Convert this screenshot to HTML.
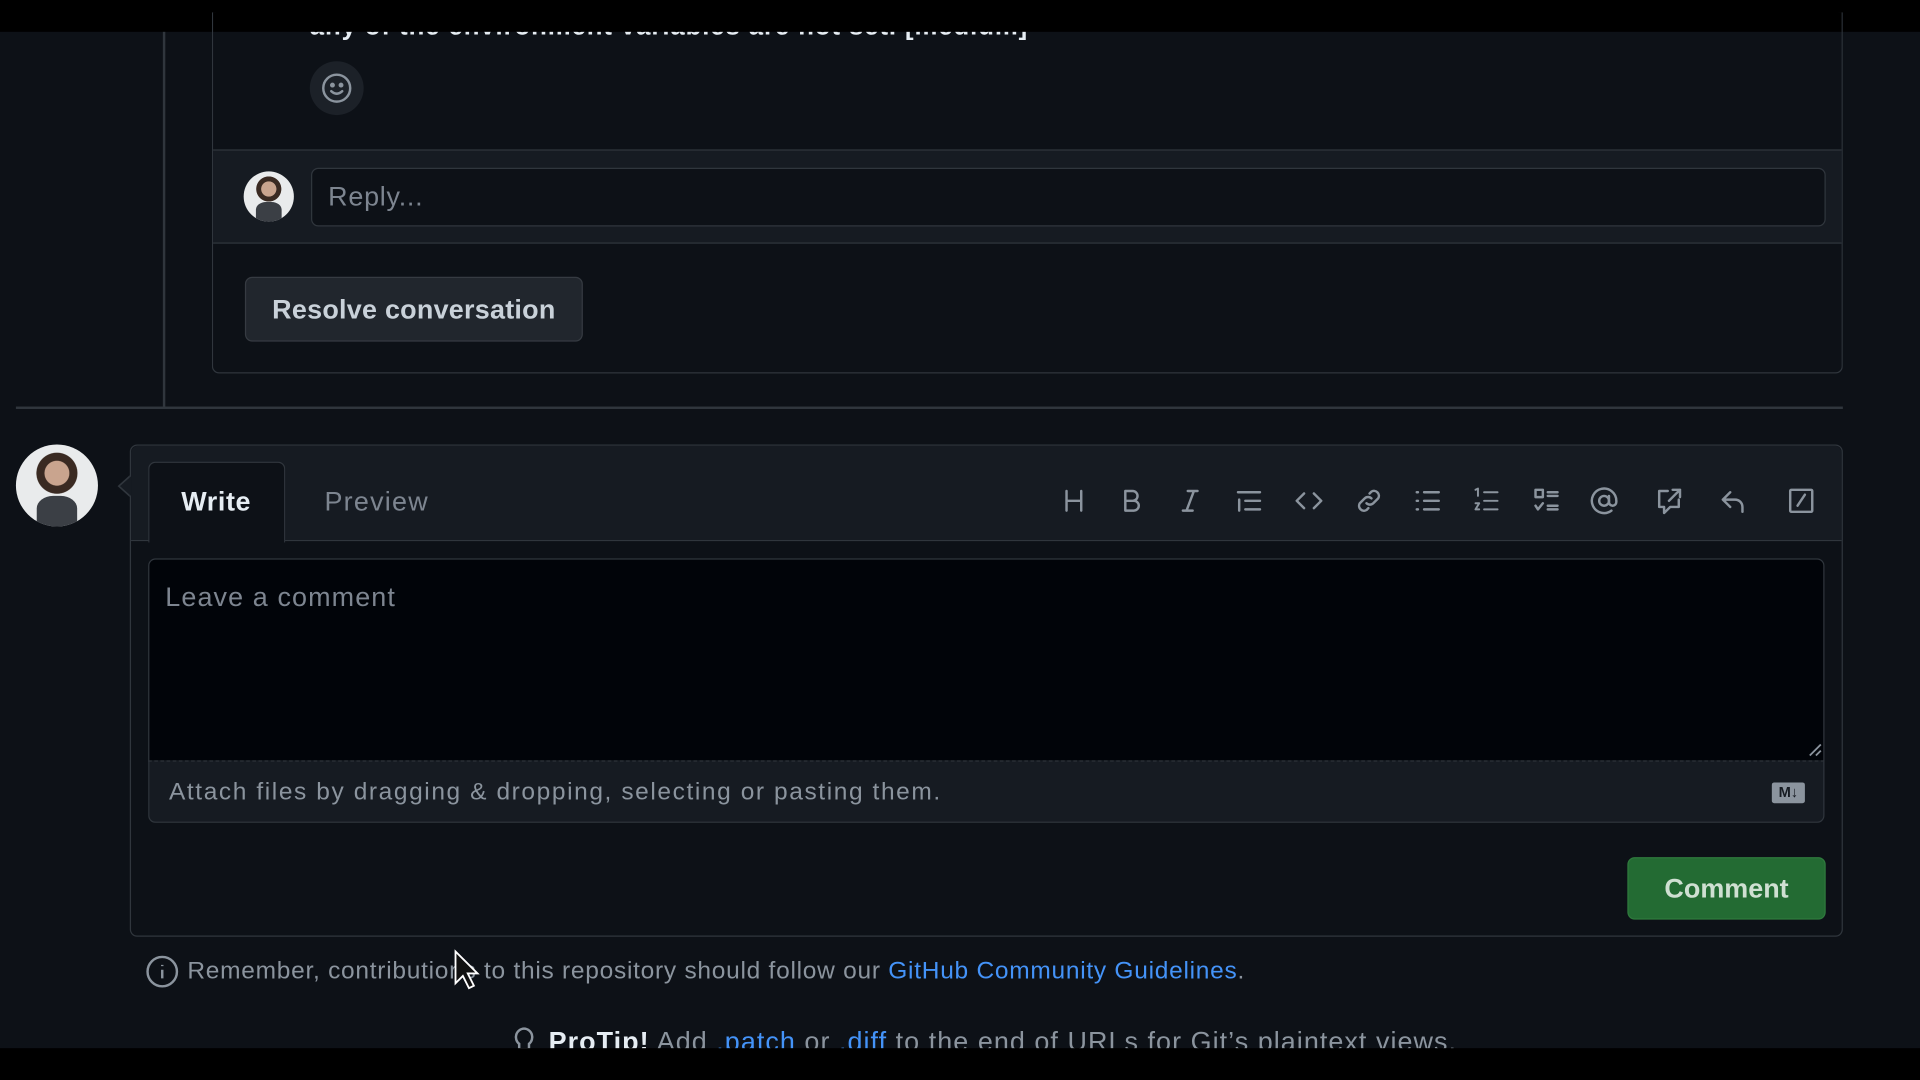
<!DOCTYPE html>
<html><head><meta charset="utf-8"><style>
html,body{margin:0;padding:0;background:#000;overflow:hidden}
#w{position:absolute;left:0;top:0;width:1568px;height:882px;transform:scale(1.2244898);transform-origin:0 0;background:#0d1117;font-family:"Liberation Sans",sans-serif;overflow:hidden}
.a{position:absolute}
.ic{position:absolute;top:397px;width:24px;height:24px;fill:none;stroke:#8b949e;stroke-width:2;stroke-linecap:round;stroke-linejoin:round}
.av{position:absolute;border-radius:50%;overflow:hidden;background:radial-gradient(circle at 50% 35%,#c9a48e 0 18%,#3a2a22 19% 30%,#e9ebec 31%)}
.av:after{content:"";position:absolute;left:25%;right:25%;bottom:0;height:38%;background:#3b3f45;border-radius:40% 40% 0 0}
</style></head><body><div id="w">
<div class="a" style="left:253px;top:10px;font-size:21px;font-weight:bold;color:#e6edf3;white-space:nowrap;letter-spacing:0.75px">any of the environment variables are not set. [medium]</div>
<div class="a" style="left:0;top:0;width:1568px;height:26px;background:#000"></div>
<div class="a" style="left:133px;top:26px;width:2px;height:307px;background:#30363d"></div>
<div class="a" style="left:173px;top:10px;width:1330px;height:294px;border:1px solid #30363d;border-top:none;border-radius:0 0 6px 6px"></div>
<div class="a" style="left:253px;top:50px;width:44px;height:44px;border-radius:50%;background:#1c2128"></div>
<svg class="a" style="left:262px;top:59px" width="26" height="26" viewBox="0 0 26 26" fill="none" stroke="#8b949e" stroke-width="2"><circle cx="13" cy="13" r="11"/><circle cx="9.5" cy="10.5" r="1" fill="#8b949e"/><circle cx="16.5" cy="10.5" r="1" fill="#8b949e"/><path d="M8.5 15.5q4.5 4 9 0" stroke-linecap="round"/></svg>
<div class="a" style="left:174px;top:122px;width:1330px;height:75px;background:#161b22;border-top:1px solid #30363d;border-bottom:1px solid #30363d"></div>
<div class="av" style="left:199px;top:140px;width:41px;height:41px"></div>
<div class="a" style="left:254px;top:137px;width:1235px;height:46px;background:#0d1117;border:1px solid #30363d;border-radius:6px"></div>
<div class="a" style="left:268px;top:148px;font-size:22px;color:#7d8590;letter-spacing:0.6px">Reply...</div>
<div class="a" style="left:200px;top:226px;width:274px;height:51px;background:#21262d;border:1px solid #363b42;border-radius:6px;color:#c9d1d9;font-size:22px;font-weight:bold;line-height:51px;text-align:center;letter-spacing:0.2px">Resolve conversation</div>
<div class="a" style="left:13px;top:332px;width:1492px;height:2px;background:#30363d"></div>
<div class="av" style="left:13px;top:363px;width:67px;height:67px"></div>
<div class="a" style="left:106px;top:363px;width:1397px;height:400px;border:1px solid #30363d;border-radius:6px;background:#0d1117"></div>
<div class="a" style="left:107px;top:364px;width:1397px;height:77px;background:#161b22;border-bottom:1px solid #30363d;border-radius:6px 6px 0 0"></div>
<div class="a" style="left:96px;top:388px;width:0;height:0;border-top:9px solid transparent;border-bottom:9px solid transparent;border-right:10px solid #30363d"></div>
<div class="a" style="left:98px;top:389px;width:0;height:0;border-top:8px solid transparent;border-bottom:8px solid transparent;border-right:9px solid #161b22"></div>
<div class="a" style="left:121px;top:377px;width:110px;height:65px;background:#0d1117;border:1px solid #30363d;border-bottom:none;border-radius:6px 6px 0 0"></div>
<div class="a" style="left:148px;top:397px;font-size:22px;font-weight:bold;color:#e6edf3;letter-spacing:0.5px">Write</div>
<div class="a" style="left:265px;top:397px;font-size:22px;color:#7d8590;letter-spacing:1px">Preview</div>
<svg class="ic" style="left:865px" viewBox="0 0 24 24"><path d="M6 4v16M18 4v16M6 12h12"/></svg>
<svg class="ic" style="left:912px" viewBox="0 0 24 24"><path d="M7 4h6a4 4 0 0 1 0 8H7zM7 12h7a4 4 0 0 1 0 8H7z"/></svg>
<svg class="ic" style="left:960px" viewBox="0 0 24 24"><path d="M10 4h8M6 20h8M15 4l-6 16"/></svg>
<svg class="ic" style="left:1008px" viewBox="0 0 24 24"><path d="M3 5h18M9 12h12M9 19h12M4 11v9"/></svg>
<svg class="ic" style="left:1057px" viewBox="0 0 24 24"><path d="M8 6l-6 6 6 6M16 6l6 6-6 6"/></svg>
<svg class="ic" style="left:1106px" viewBox="0 0 24 24"><path d="M10 14a4 4 0 0 0 5.5 0l4-4a4 4 0 0 0-5.5-5.5l-1.5 1.5M14 10a4 4 0 0 0-5.5 0l-4 4a4 4 0 0 0 5.5 5.5l1.5-1.5"/></svg>
<svg class="ic" style="left:1154px" viewBox="0 0 24 24"><path d="M9 5h12M9 12h12M9 19h12M3 5h1M3 12h1M3 19h1"/></svg>
<svg class="ic" style="left:1202px" viewBox="0 0 24 24"><path d="M10 5h11M10 12h11M10 19h11M3 3l2-1v6M3 14h3l-3 5h3" stroke-width="1.6"/></svg>
<svg class="ic" style="left:1251px" viewBox="0 0 24 24"><path d="M3 3h6v6H3zM13 5h8M13 8h8M13 16h8M13 19h8M3 16l2 3 4-5"/></svg>
<svg class="ic" style="left:1298px" viewBox="0 0 24 24"><circle cx="12" cy="12" r="4"/><path d="M16 8v5a3 3 0 0 0 6 0v-1a10 10 0 1 0-4 8"/></svg>
<svg class="ic" style="left:1351px" viewBox="0 0 24 24"><path d="M11 4H4v13h4v5l5-5h7v-6M15 3h6v6M21 3l-9 9"/></svg>
<svg class="ic" style="left:1404px" viewBox="0 0 24 24"><path d="M9 5L3 11l6 6M3 11h10a6 6 0 0 1 6 6v4"/></svg>
<svg class="ic" style="left:1459px" viewBox="0 0 24 24"><rect x="3" y="3" width="18" height="18" rx="1"/><path d="M9 16l6-9"/></svg>
<div class="a" style="left:121px;top:456px;width:1367px;height:164px;background:#010409;border:1px solid #30363d;border-radius:6px 6px 0 0"></div>
<div class="a" style="left:135px;top:475px;font-size:22px;color:#7d8590;letter-spacing:0.9px">Leave a comment</div>
<svg class="a" style="left:1476px;top:606px" width="12" height="12" stroke="#8b949e" stroke-width="1.5"><path d="M2 11L11 2M7 11l4-4"/></svg>
<div class="a" style="left:121px;top:621px;width:1367px;height:49px;background:#161b22;border:1px solid #30363d;border-top:1px dashed #30363d;border-radius:0 0 6px 6px"></div>
<div class="a" style="left:138px;top:636px;font-size:20px;color:#8b949e;letter-spacing:1.3px;white-space:nowrap">Attach files by dragging &amp; dropping, selecting or pasting them.</div>
<div class="a" style="left:1447px;top:639px;width:27px;height:17px;background:#8b949e;border-radius:2px;color:#161b22;font-size:12px;font-weight:bold;line-height:17px;text-align:center">M↓</div>
<div class="a" style="left:1329px;top:700px;width:160px;height:49px;background:#236b33;border:1px solid #2f7a3d;border-radius:6px;color:#cfe0d2;font-size:22px;font-weight:bold;line-height:49px;text-align:center">Comment</div>
<svg class="a" style="left:119px;top:780px" width="27" height="27" fill="none" stroke="#8b949e" stroke-width="2"><circle cx="13.5" cy="13.5" r="12"/><path d="M13.5 12v7M13.5 8v1"/></svg>
<div class="a" style="left:153px;top:782px;font-size:20px;color:#8b949e;white-space:nowrap;letter-spacing:0.6px">Remember, contributions to this repository should follow our <span style="color:#4493f8">GitHub Community Guidelines</span>.</div>
<svg class="a" style="left:370px;top:775px" width="22" height="34"><path d="M2 2v26l6-6 5 10 4-2-5-10h8z" fill="#111" stroke="#fff" stroke-width="1.5"/></svg>
<svg class="a" style="left:418px;top:838px" width="20" height="26" fill="none" stroke="#8b949e" stroke-width="2"><path d="M10 2a7 7 0 0 0-4 12.5V19h8v-4.5A7 7 0 0 0 10 2zM7 23h6"/></svg>
<div class="a" style="left:448px;top:838px;font-size:22px;color:#8b949e;white-space:nowrap;letter-spacing:0.85px"><b style="color:#e6edf3">ProTip!</b> Add <span style="color:#4493f8">.patch</span> or <span style="color:#4493f8">.diff</span> to the end of URLs for Git’s plaintext views.</div>
<div class="a" style="left:0;top:856px;width:1568px;height:26px;background:#000"></div>
</div></body></html>
